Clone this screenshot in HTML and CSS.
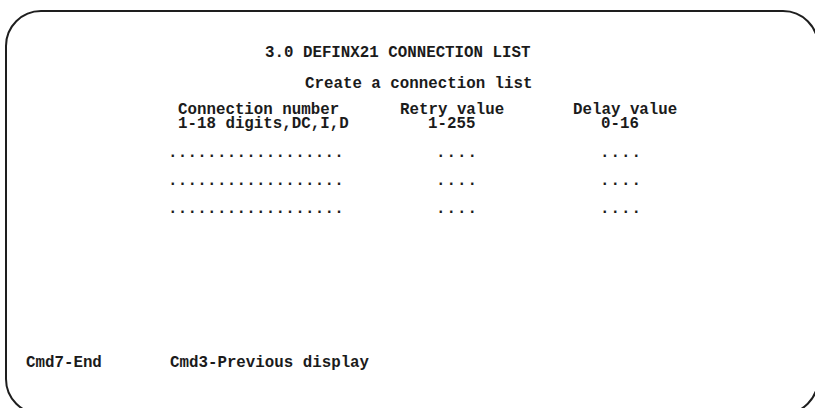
FILE: index.html
```html
<!DOCTYPE html>
<html>
<head>
    <title>DEFINX21 connection list</title>
    <meta http-equiv="Content-Type" content="text/html;charset=utf-8"/>
    <link rel="stylesheet" href="styles.css">
</head>
<body>
<div class="display">
<div class="screen">
    <div class="title">3.0 DEFINX21 CONNECTION LIST</div>
    <div class="subtitle">Create a connection list</div>

    <div class="fields">
        <div class="row head">
            <div class="c1"><span class="lbl">Connection number</span><span class="lbl">1-18 digits,DC,I,D</span></div>
            <div class="c2"><span class="lbl">Retry value</span><span class="lbl rng">1-255</span></div>
            <div class="c3"><span class="lbl">Delay value</span><span class="lbl rng">0-16</span></div>
        </div>
        <div class="row entry">
            <div class="c1"><span class="dots">..................</span></div>
            <div class="c2"><span class="dots">....</span></div>
            <div class="c3"><span class="dots">....</span></div>
        </div>
        <div class="row entry">
            <div class="c1"><span class="dots">..................</span></div>
            <div class="c2"><span class="dots">....</span></div>
            <div class="c3"><span class="dots">....</span></div>
        </div>
        <div class="row entry">
            <div class="c1"><span class="dots">..................</span></div>
            <div class="c2"><span class="dots">....</span></div>
            <div class="c3"><span class="dots">....</span></div>
        </div>
    </div>

    <div class="keys">
        <span class="key">Cmd7-End</span>
        <span class="key">Cmd3-Previous display</span>
    </div>
</div>
</div>
</body>
</html>
```

FILE: styles.css
```css
*{color: #1b1b1b}
body {
    margin: 0px;
    padding: 0px;
    background: #fff;
    font: bold 15.8px "Liberation Mono", "DejaVu Sans Mono", monospace;
    line-height: 13px;
}

/* visible part of the terminal; the frame runs past its right and bottom edge */
.display{
    width: 815px;
    height: 408px;
    overflow: hidden;
    padding: 10px 0px 0px 5px;
    box-sizing: border-box;
}

.screen{
    box-sizing: border-box;
    width: 814px;
    height: 405px;
    border: 2px solid #1e1e1e;
    border-radius: 36px;
    padding: 35px 0px 43px 0px;
    display: flex;
    flex-direction: column;
}

.title{
    padding-left: 258px;
    white-space: pre;
}
.subtitle{
    margin-top: 18px;
    padding-left: 298px;
    white-space: pre;
}

.fields{
    margin-top: 12px;
    display: flex;
    flex-direction: column;
    gap: 15px;
}
.row{
    display: grid;
    grid-template-columns: 228px 173px 1fr;
    padding-left: 161px;
}
.row > div{
    display: flex;
    flex-direction: column;
}
.head{
    line-height: 14px;
}
.lbl{
    white-space: pre;
}
.head .c1{ padding-left: 10px; }
.head .c2{ padding-left: 4px; }
.head .c3{ padding-left: 4px; }
.head .rng{ padding-left: 28px; }
.head + .entry{ margin-top: 1px; }

.dots{
    white-space: pre;
    letter-spacing: 0.3px;
}
.entry .c2 .dots{ padding-left: 40px; letter-spacing: 1px; }
.entry .c3 .dots{ padding-left: 31px; letter-spacing: 1px; }

.keys{
    margin-top: auto;
    padding-left: 19px;
    display: flex;
}
.key{
    white-space: pre;
}
.key:first-child{
    width: 144px;
}
```
